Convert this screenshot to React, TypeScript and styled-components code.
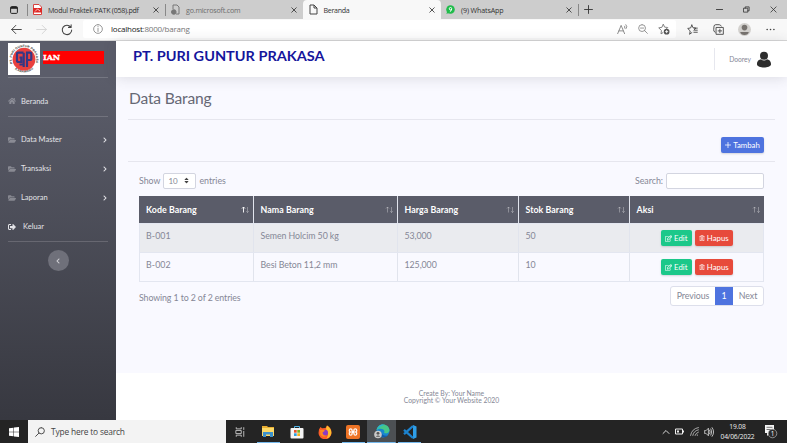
import React from "react";
import styled, { createGlobalStyle, css } from "styled-components";
import {
  FaFolderOpen, FaHome, FaSignOutAlt, FaChevronRight, FaChevronLeft, FaChevronUp, FaRegEdit, FaRegTrashAlt, FaSort,
} from "react-icons/fa";

const Global = createGlobalStyle`
  * { box-sizing: border-box; }
  html, body { margin: 0; padding: 0; }
  body { width: 787px; height: 443px; overflow: hidden; font-family: Lato, "Open Sans", sans-serif; font-size: 9.2px; color: #858796; }
  svg { display: block; flex: none; }
`;

const Screen = styled.div`
  width: 787px; height: 443px; display: flex; flex-direction: column; background: #fff;
`;

/* ---------- browser ---------- */
const divider = css`
  border-right: 1px solid;
  border-image: linear-gradient(transparent 25%, #888 25%, #888 80%, transparent 80%) 1;
`;
const TabStrip = styled.div`
  height: 19px; flex: none; display: flex; align-items: stretch; background: #cdcdcd;
  font: 7.1px/18px "Open Sans", sans-serif; color: #333;
`;
const Pinned = styled.div`
  width: 28px; display: flex; align-items: center; justify-content: center; ${divider}
`;
const Tab = styled.div<{ $w: number; $active?: boolean; $muted?: boolean; $line?: boolean }>`
  width: ${p => p.$w}px; display: flex; align-items: center; padding: 0 6px 0 5px; gap: 6px; white-space: nowrap;
  color: ${p => (p.$muted ? "#6c6c6c" : "#333")};
  ${p => p.$active && css`background: #f8f8f8; border-radius: 4px 4px 0 0;`}
  ${p => p.$line && divider}
`;
const TabLabel = styled.span<{ $ls?: number }>`flex: 1; letter-spacing: ${p => p.$ls ?? 0}px;`;
const Controls = styled.div`
  margin-left: auto; display: flex; align-items: center; gap: 20px; padding-right: 10px;
`;
const Toolbar = styled.div`
  height: 22px; flex: none; display: flex; background: #f8f8f8; border-bottom: 1px solid #d8d8d8; color: #444;
`;
const NavButtons = styled.div`width: 83px; display: flex; align-items: center; gap: 14px; padding-left: 11px;`;
const Address = styled.div`
  width: 593px; height: 18px; margin-top: 1px; background: #fff; border-radius: 2px;
  display: flex; align-items: center; padding: 0 6px 0 10px; gap: 8px;
  font: 8px/18px "Open Sans", sans-serif; letter-spacing: -0.22px; color: #777;
  b { font-weight: 400; color: #222; }
`;
const AddressTools = styled.div`margin-left: auto; display: flex; align-items: center; gap: 10px;`;
const ToolbarEnd = styled.div`flex: 1; display: flex; align-items: center; justify-content: space-between; padding: 0 12px 0 11px;`;

/* ---------- page ---------- */
const Page = styled.div`height: 379px; flex: none; display: flex;`;
const Sidebar = styled.aside`
  width: 116px; flex: none; padding: 0 8px; display: flex; flex-direction: column;
  background: linear-gradient(180deg, #5b5d6a 10%, #373840 100%); color: #e3e3e7;
`;
const Brand = styled.div`height: 36px; display: flex; padding-top: 2px; gap: 3px;`;
const BrandBar = styled.div`
  width: 61px; height: 13px; margin-top: 8px; background: #f00; color: #fff;
  font: 900 8px/13px "DejaVu Serif", serif; letter-spacing: -0.1px; -webkit-text-stroke: 0.3px #fff;
`;
const Rule = styled.div`height: 1px; flex: none; background: rgba(255,255,255,.16);`;
const MenuGroup = styled.nav`padding-top: 8px;`;
const MenuItem = styled.a<{ $h: number; $gap?: number }>`
  height: ${p => p.$h}px; display: flex; align-items: center; gap: ${p => p.$gap ?? 5}px; font-size: 7.5px;
  span { flex: 1; }
  svg:first-child { opacity: ${p => (p.$gap ? 1 : 0.38)}; }
`;
const Collapse = styled.button`
  width: 21px; height: 21px; margin: 8px auto 0; border: 0; padding: 0; border-radius: 50%; background: #6f707a; color: #d0d0d5;
  display: flex; align-items: center; justify-content: center;
`;
const Main = styled.main`flex: 1; display: flex; flex-direction: column; background: #f9f9ff;`;
const Topbar = styled.header`
  height: 36px; flex: none; display: flex; align-items: center; justify-content: space-between; padding: 0 15px 0 16.5px;
  background: #fff; box-shadow: 0 1px 14px rgba(58,59,69,.16);
`;
const Company = styled.h1`
  margin: -5px 0 0; font: 700 12.3px/16px Lato, sans-serif; color: #15159c; white-space: nowrap;
  transform: scaleX(1.18); transform-origin: left;
`;
const User = styled.div`
  height: 22px; display: flex; align-items: center; gap: 5px; border-left: 1px solid #e6e7ee; padding-left: 14px; font-size: 6.7px;
`;
const Content = styled.section`height: 296px; flex: none; padding: 0 12px 0 12px;`;
const Heading = styled.h2`
  margin: 0; height: 43px; border-bottom: 1px solid #e6e6ee; font: 400 15.6px/43px Lato, sans-serif; color: #666875;
  padding-left: 1px; letter-spacing: -0.18px;
`;
const Actions = styled.div`
  height: 42px; border-bottom: 1px solid #e6e6ee; display: flex; justify-content: flex-end; padding: 17px 11px 0 0;
`;
const Button = styled.button<{ $bg: string; $w: number; $h: number }>`
  width: ${p => p.$w}px; height: ${p => p.$h}px; border: 0; border-radius: 2px; padding: 0; background: ${p => p.$bg}; color: #fff;
  display: flex; align-items: center; justify-content: center; gap: 2px; font: 7.8px Lato, sans-serif;
  box-shadow: 0 1px 2px rgba(58,59,69,.2);
`;
const Wrapper = styled.div`padding: 10px 11px 0 11px;`;
const Filters = styled.div`
  height: 24px; display: flex; justify-content: space-between; font-size: 8.8px;
  label { display: flex; height: 17px; align-items: center; gap: 3px; }
`;
const Select = styled.span`
  width: 33px; height: 16px; border: 1px solid #d3d5e0; border-radius: 2px; background: #fff; display: flex; align-items: center;
  justify-content: space-between; padding: 0 5px 0 4px; font-size: 8px; svg { color: #444; }
`;
const Search = styled.input`width: 98px; height: 16px; border: 1px solid #d3d5e0; border-radius: 2px; background: #fff; padding: 0 4px;`;
const Table = styled.div`border: 1px solid #e3e6f0; border-top: 0; font-size: 8.8px;`;
const Row = styled.div<{ $striped?: boolean; $head?: boolean }>`
  display: grid; grid-template-columns: 113px 144px 121px 111px 1fr; height: 29px;
  background: ${p => (p.$striped ? "#eaebef" : "transparent")};
  ${p => p.$head && css`background: #5a5c69; height: 27px; color: #fff; font-weight: 700; margin: 0 -1px; grid-template-columns: 114px 144px 121px 111px 1fr;`}
  & + & { border-top: 1px solid #e3e6f0; }
`;
const Cell = styled.div<{ $head?: boolean }>`
  display: flex; padding: ${p => (p.$head ? "0 3px 0 7px" : "6px 0 0 6px")}; letter-spacing: ${p => (p.$head ? 0.06 : -0.06)}px; line-height: 12px;
  ${p => p.$head && css`align-items: center; justify-content: space-between;`}
  & + & { border-left: 1px solid ${p => (p.$head ? "#6b6d7a" : "#e1e4ed")}; padding-left: 6.5px; }
`;
const Code = styled.span`letter-spacing: 0.1px;`;
const Buttons = styled.div`flex: 1; display: flex; justify-content: center; gap: 3px; padding-right: 6px;`;
const TableFoot = styled.div`
  display: flex; justify-content: space-between; padding-top: 4px; font-size: 8.8px; letter-spacing: -0.1px;
  > span { line-height: 24px; }
`;
const Pager = styled.div`
  height: 20px; display: flex; border: 1px solid #dddfeb; border-radius: 3px; background: #fff; overflow: hidden; letter-spacing: -0.05px;
`;
const PageLink = styled.a<{ $w: number; $active?: boolean }>`
  width: ${p => p.$w}px; text-align: center; line-height: 18px;
  ${p => p.$active && css`background: #4e73df; color: #fff; margin: -1px 0; line-height: 20px;`}
`;
const Footer = styled.footer`
  flex: 1; background: #fff; text-align: center; font-size: 6.8px; line-height: 7px; padding-top: 17px;
`;

/* ---------- taskbar ---------- */
const Taskbar = styled.div`
  height: 23px; flex: none; display: flex; background: #242424; color: #eee; font-family: "Open Sans", sans-serif;
`;
const Start = styled.div`width: 28px; display: flex; align-items: center; justify-content: center;`;
const TaskSearch = styled.div`
  width: 198px; background: #f3f3f3; color: #444; display: flex; align-items: center; gap: 6px; padding-left: 7px; font-size: 8.4px; letter-spacing: -0.17px;
`;
const TaskButton = styled.div<{ $open?: boolean; $active?: boolean }>`
  width: 28.3px; display: flex; align-items: center; justify-content: center;
  background: ${p => (p.$active ? "#4c5054" : "transparent")};
  ${p => p.$open && css`background-image: linear-gradient(#76b9ed, #76b9ed); background-size: ${p.$active ? "100%" : "23px"} 1px; background-position: bottom center; background-repeat: no-repeat;`}
`;
const Tray = styled.div`margin-left: auto; display: flex; align-items: center; gap: 5.5px; padding-right: 9px;`;
const Clock = styled.div`width: 36px; text-align: center; font-size: 6.7px; line-height: 9.5px; letter-spacing: -0.15px; white-space: nowrap;`;

/* ---------- drawings ---------- */
type LineProps = { w: number; h?: number; box?: string; d: string; c?: string; s?: number; fill?: string };
const Line = ({ w, h = w, box = "0 0 16 16", d, c = "currentColor", s = 1.4, fill = "none" }: LineProps) => (
  <svg width={w} height={h} viewBox={box} fill={fill} stroke={c} strokeWidth={s} strokeLinecap="round" strokeLinejoin="round"><path d={d} /></svg>
);
const Close = () => <Line w={6} d="M2 2 14 14M14 2 2 14" s={2.2} c="#333" />;
const STAR = "M7 1.5 8.8 5.5 13 6 10 9M4 14.5 4.6 10 1 6.5 5.3 5.7 7 1.5M4 14.5 7 12.6";

const Logo = () => (
  <svg width="32" height="32" viewBox="0 0 32 32">
    <rect width="32" height="32" fill="#fff" />
    <defs>
      <path id="arcTop" d="M4.600 20.500A12.200 12.200 0 1 1 27.400 20.500" />
      <path id="arcBottom" d="M4.800 24A14.200 14.200 0 0 0 27.200 24" />
    </defs>
    <g fontFamily="Liberation Sans" fontSize="3.1" fontWeight="700" fill="#333">
      <text><textPath href="#arcTop" textLength="46">PT. PURI GUNTUR PRAKASA</textPath></text>
      <text><textPath href="#arcBottom" startOffset="3" textLength="20">KARAWANG</textPath></text>
    </g>
    <circle cx="16" cy="16.200" r="11.400" fill="#e9403f" />
    <path d="M15.500 9.700H10.500Q9 9.700 9 11V17.500Q9 19 10.500 19H13.300V14.500H11.500M15.700 9.700V24M15.700 21.500H11.500M19 24V9.700H22Q23.300 9.700 23.300 11V15.500Q23.300 17 22 17H19" fill="none" stroke="#343785" strokeWidth="2.200" />
  </svg>
);
const Person = () => (
  <svg width="16" height="17" viewBox="0 0 16 17" fill="#2d2d2d">
    <path d="M1 13.500C.8 10 3.200 8.400 5 8.200 7 9.800 9 9.800 11 8.200c2 .2 4.300 2 4 5.300-.6 4-13.400 4-14 0Z" /><circle cx="8" cy="4.700" r="4" />
  </svg>
);
const Avatar = () => (
  <svg width="13" height="13" viewBox="0 0 13 13"><circle cx="6.500" cy="6.500" r="6.500" fill="#d3d1ce" /><circle cx="6.500" cy="4.600" r="2.800" fill="#77736f" /><path d="M2.200 9h8.600q-.6 3-4.300 3T2.200 9Z" fill="#77736f" /></svg>
);
const SortArrows = ({ up }: { up?: boolean }) => (
  <svg width="9" height="8" viewBox="0 0 9 8" fill="none" stroke="#fff" strokeWidth=".9">
    <path d="M2.500 6.500V1M1 2.500 2.500 1 4 2.500" opacity={up ? 1 : 0.35} /><path d="M6.500 1V6.500M5.200 5.200 6.500 6.500 7.800 5.200" opacity=".35" />
  </svg>
);
const Explorer = () => (
  <svg width="14" height="13" viewBox="0 0 14 13"><path d="M1 1h5l1 1h6v9H1Z" fill="#e8ad32" /><path d="M1 3h12v8H1Z" fill="#fbd968" /><path d="M2 7h10v5H9V9.500H5V12H2Z" fill="#3c91cc" /></svg>
);
const Store = () => (
  <svg width="14" height="14" viewBox="0 0 14 14"><path d="M4.500 4V1.500h5V4" fill="none" stroke="#52b5e8" /><rect x=".5" y="3" width="13" height="10.500" rx="1" fill="#f4f4f4" /><path d="M4 5h2.700v2.700H4Z" fill="#e8502b" /><path d="M7.300 5H10v2.700H7.300Z" fill="#76ae22" /><path d="M4 8.300h2.700V11H4Z" fill="#2a9fe0" /><path d="M7.300 8.300H10V11H7.300Z" fill="#f2b21b" /></svg>
);
const Firefox = () => (
  <svg width="14" height="14" viewBox="0 0 14 14"><path d="M1 4.500 2.500 2 4 3.300 7.500 3 9 .5Q13.600 3 13.500 8A6.500 6.200 0 0 1 .5 8Z" fill="#fb5d28" /><path d="M9 .5q5.500 4 4 9-1.500 3.500-4.500 4Q12 8 8 4Z" fill="#ffbd2e" /><circle cx="7" cy="7.800" r="3" fill="#8c3cc4" /><path d="M2 5q3-1 5 .7L4.500 7.500Q5 11 9 10.800 5 13 2.500 10Z" fill="#ff8a1e" /></svg>
);
const Xampp = () => (
  <svg width="14" height="14" viewBox="0 0 14 14"><rect width="14" height="14" rx="2" fill="#ee7426" /><path d="M6 6.300V5Q6 3.800 4.700 3.800T3.300 5V6L4.300 7 3.300 8V9Q3.300 10.200 4.700 10.200T6 9V7.700H8V9Q8 10.200 9.300 10.200T10.700 9V8L9.700 7 10.700 6V5Q10.700 3.800 9.300 3.800T8 5V6.300Z" fill="none" stroke="#fff" strokeWidth="1.200" /></svg>
);
const Edge = () => (
  <svg width="16" height="15" viewBox="0 0 16 15"><circle cx="9" cy="7" r="6.500" fill="#1686cf" /><path d="M2.600 6C4-2 15.500-1 15.500 6.500 15 9.500 11 10 10 8.700 12 6 7 3 2.600 6Z" fill="#45c78a" /><path d="M2.600 6C4 1 8-.5 11 1 6 1.500 5 4 2.600 6Z" fill="#28b4d6" /><path d="M7 8q2 5 7 3.500-3 3-7 1Z" fill="#135aa7" /><circle cx="4" cy="10.500" r="3.800" fill="#c9c9c9" /><circle cx="4" cy="9.300" r="1.400" fill="#555" /><path d="M1.800 12.800q2.200-2.500 4.400 0Z" fill="#555" /></svg>
);
const VsCode = () => (
  <svg width="14" height="14" viewBox="0 0 14 14"><path d="M10 0 13.500 1.500v11L10 14Z" fill="#2f9fe8" /><path d="M10 1 1 9.200M10 13 1 4.800" stroke="#1c83cf" strokeWidth="2.300" /></svg>
);
const Notice = () => (
  <svg width="17" height="15" viewBox="0 0 17 15"><path d="M4 1H13V9H9L6 12V9H4Z" fill="#f4f4f4" /><path d="M5.500 3.300H11.500M5.500 5.500H11.500" stroke="#555" strokeWidth=".8" /><circle cx="11.500" cy="9.500" r="4.300" fill="#2b2b2b" stroke="#aaa" strokeWidth=".8" /><text x="9.800" y="12" fontSize="6.500" fontFamily="Open Sans" fill="#fff">1</text></svg>
);

const items = [
  { code: "B-001", name: "Semen Holcim 50 kg", price: "53,000", stock: "50" },
  { code: "B-002", name: "Besi Beton 11,2 mm", price: "125,000", stock: "10" },
];
const columns = ["Kode Barang", "Nama Barang", "Harga Barang", "Stok Barang", "Aksi"];
const groups = ["Data Master", "Transaksi", "Laporan"];

export default function App() {
  return (
    <Screen>
      <Global />
      <TabStrip>
        <Pinned><svg width="8" height="8" viewBox="0 0 8 8"><rect x=".6" y=".6" width="6.800" height="6.800" rx="1" fill="none" stroke="#222" /><path d="M.6 1h6.800v1.800H.6Z" fill="#222" /></svg></Pinned>
        <Tab $w={138} $line>
          <svg width="9" height="11" viewBox="0 0 9 11"><path d="M.5.500h5.500L8.500 3v7.500h-8Z" fill="#fff" stroke="#d74340" /><path d="M0 4h9v4.500H0Z" fill="#df2825" /><path d="M2 7.500 4.500 5 7 7" stroke="#fff" strokeWidth=".7" fill="none" /></svg>
          <TabLabel $ls={-0.26}>Modul Praktek PATK (058).pdf</TabLabel><Close />
        </Tab>
        <Tab $w={136.5} $muted>
          <svg width="9" height="11" viewBox="0 0 9 11" fill="none" stroke="#777"><path d="M2 5V1h4l2 2v7H5" /><circle cx="2.800" cy="8" r="2.300" fill="#777" /></svg>
          <TabLabel $ls={-0.2}>go.microsoft.com</TabLabel><Close />
        </Tab>
        <Tab $w={138.500} $active>
          <svg width="10" height="11" viewBox="0 0 10 11" fill="none" stroke="#444"><path d="M2 1h4l3 3v6H2ZM6 1v3h3" /></svg>
          <TabLabel $ls={-0.32}>Beranda</TabLabel><Close />
        </Tab>
        <Tab $w={138} $line>
          <svg width="9" height="9" viewBox="0 0 9 9"><circle cx="4.500" cy="4.500" r="4.300" fill="#20bc4b" /><path d="M.3 8.800 1.500 6l2 2Z" fill="#20bc4b" /><circle cx="4.500" cy="3.700" r="1.200" fill="none" stroke="#fff" /><path d="M5.600 4q0 2-1.700 2.500" stroke="#fff" fill="none" /></svg>
          <TabLabel $ls={-0.12}>(9) WhatsApp</TabLabel><Close />
        </Tab>
        <Tab $w={20}><Line w={9} d="M8 1V15M1 8H15" s={1.600} /></Tab>
        <Controls>
          <Line w={7} d="M1 8H15" s={2} /><Line w={7} d="M2 5H11V14H2ZM5 5V2H14V11H11" s={1.800} /><Line w={7} d="M2 2 14 14M14 2 2 14" s={1.800} />
        </Controls>
      </TabStrip>
      <Toolbar>
        <NavButtons>
          <Line w={11} d="M15 8H1M7 2 1 8 7 14" /><Line w={11} d="M1 8H15M9 2 15 8 9 14" c="#d4d4d4" /><Line w={12} d="M13 4A6.300 6.300 0 1 0 14.300 8M13.500 1V4.500H10" />
        </NavButtons>
        <Address>
          <Line w={10} d="M8 1A7 7 0 1 0 8 15 7 7 0 1 0 8 1M8 7V12M8 4V4.500" c="#777" s={1.200} />
          <span><b>localhost</b>:8000/barang</span>
          <AddressTools>
            <Line w={11} d="M1 14 6 2 11 14M3 10H9M11 3Q12.500 4 11 6M13 1Q16 4 13 7" c="#777" s={1.200} />
            <Line w={10} d="M6.500 1A5.500 5.500 0 1 0 6.500 12 5.500 5.500 0 1 0 6.500 1M10.500 10.500 15 15M4 6.500H9" c="#777" s={1.200} />
            <svg width="12" height="12" viewBox="0 0 16 16" fill="none" stroke="#777" strokeWidth="1.200"><path d={STAR} /><circle cx="11.500" cy="11.500" r="3.800" fill="#555" stroke="none" /><path d="M9.500 11.500H13.500M11.500 9.500V13.500" stroke="#fff" /></svg>
          </AddressTools>
        </Address>
        <ToolbarEnd>
          <Line w={11} d={STAR + "M10.500 6H15M11 9H15M10 12H15"} s={1.300} />
          <Line w={11} d="M5 5H15V15H5ZM10 7.500V12.500M7.500 10H12.500M3 12Q.5 11 1 8L1.500 3Q2 1 4 1H9Q11 1 12 3" s={1.300} />
          <Avatar />
          <Line w={9} d="M2 8H2.100M8 8H8.100M14 8H14.100" s={2.800} />
        </ToolbarEnd>
      </Toolbar>
      <Page>
        <Sidebar>
          <Brand><Logo /><BrandBar>IAN</BrandBar></Brand>
          <Rule />
          <MenuGroup><MenuItem $h={30}><FaHome size={8} /><span>Beranda</span></MenuItem></MenuGroup>
          <Rule />
          <MenuGroup>
            {groups.map(g => (
              <MenuItem $h={29} key={g}><FaFolderOpen size={8} /><span>{g}</span><FaChevronRight size={6} /></MenuItem>
            ))}
            <MenuItem $h={29} $gap={7}><FaSignOutAlt size={8} /><span>Keluar</span></MenuItem>
          </MenuGroup>
          <Rule />
          <Collapse><FaChevronLeft size={6} /></Collapse>
        </Sidebar>
        <Main>
          <Topbar>
            <Company>PT. PURI GUNTUR PRAKASA</Company>
            <User>Doorey<Person /></User>
          </Topbar>
          <Content>
            <Heading>Data Barang</Heading>
            <Actions>
              <Button $bg="#4e73df" $w={43} $h={16}><Line w={6} d="M8 1V15M1 8H15" s={2} />Tambah</Button>
            </Actions>
            <Wrapper>
              <Filters>
                <label>Show <Select>10 <FaSort size={7} /></Select> entries</label>
                <label>Search: <Search /></label>
              </Filters>
              <Table>
                <Row $head>
                  {columns.map((c, i) => <Cell $head key={c}>{c}<SortArrows up={i === 0} /></Cell>)}
                </Row>
                {items.map((r, i) => (
                  <Row key={r.code} $striped={i === 0}>
                    <Cell><Code>{r.code}</Code></Cell><Cell>{r.name}</Cell><Cell>{r.price}</Cell><Cell>{r.stock}</Cell>
                    <Cell><Buttons>
                      <Button $bg="#1cc88a" $w={31} $h={16}><FaRegEdit size={7} />Edit</Button>
                      <Button $bg="#e74a3b" $w={38} $h={16}><FaRegTrashAlt size={6} />Hapus</Button>
                    </Buttons></Cell>
                  </Row>
                ))}
              </Table>
              <TableFoot>
                <span>Showing 1 to 2 of 2 entries</span>
                <Pager><PageLink $w={44}>Previous</PageLink><PageLink $w={18} $active>1</PageLink><PageLink $w={30}>Next</PageLink></Pager>
              </TableFoot>
            </Wrapper>
          </Content>
          <Footer>Create By: Your Name<br />Copyright © Your Website 2020</Footer>
        </Main>
      </Page>
      <Taskbar>
        <Start><svg width="10" height="10" viewBox="0 0 10 10" fill="#fff"><path d="M0 1.300 4.500.7V4.700H0ZM5 .6 10 0V4.700H5ZM0 5.200H4.500V9.300L0 8.700ZM5 5.200H10V10L5 9.400Z" /></svg></Start>
        <TaskSearch><Line w={10} d="M10 1A5 5 0 1 0 10 11 5 5 0 1 0 10 1M6.300 9.700 1 15" s={1.500} />Type here to search</TaskSearch>
        <TaskButton><Line w={10} d="M2 1V3H10V1M2 5.500H10V10.500H2ZM2 15V13H10V15M14 1V4M14 7V15" c="#ccc" /></TaskButton>
        <TaskButton $open><Explorer /></TaskButton>
        <TaskButton><Store /></TaskButton>
        <TaskButton><Firefox /></TaskButton>
        <TaskButton $open><Xampp /></TaskButton>
        <TaskButton $open $active><Edge /></TaskButton>
        <TaskButton $open><VsCode /></TaskButton>
        <Tray>
          <Line w={8} d="M2 11 8 5 14 11" s={1.800} />
          <svg width="9" height="7" viewBox="0 0 9 7"><path d="M.5 1h7v5h-7Z" fill="none" stroke="#eee" /><path d="M2 2.500h2v2H2ZM8 2.500h1v2H8Z" fill="#eee" /></svg>
          <Line w={9} d="M1 15Q3 3 15 1M5 15Q6 7 15 5M9 15Q10 11 15 9M13 15V14" c="#ccc" />
          <Line w={10} d="M1 6H3L7 2V14L3 10H1ZM9 5Q11 8 9 11M11 3Q14 8 11 13M13 1Q18 8 13 15" c="#eee" s={1.200} />
          <Clock>19.08<br />04/06/2022</Clock>
          <Notice />
        </Tray>
      </Taskbar>
    </Screen>
  );
}
